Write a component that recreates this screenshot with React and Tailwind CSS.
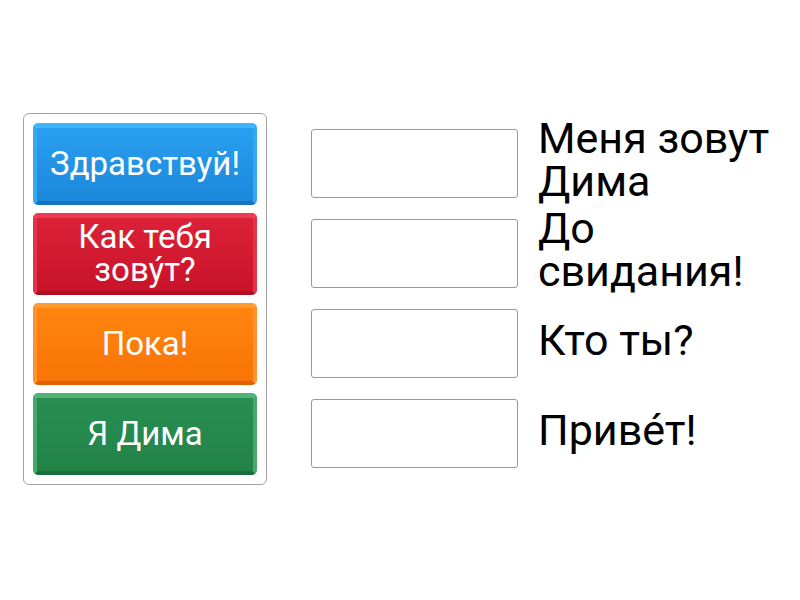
const cards = [
  { label: 'Здравствуй!', edge: 'border-t-[#3fb6fb] border-x-[#35a8f3] border-b-[#1674c4]', face: 'bg-gradient-to-b from-[#2a9ff0] to-[#1c88da]' },
  { label: 'Как тебя зову́т?', edge: 'border-t-[#ec3b52] border-x-[#e3334a] border-b-[#b00c22]', face: 'bg-gradient-to-b from-[#dc2138] to-[#c9132b]' },
  { label: 'Пока!', edge: 'border-t-[#ff9a30] border-x-[#ff922a] border-b-[#e36000]', face: 'bg-gradient-to-b from-[#ff850f] to-[#f97406]' },
  { label: 'Я Дима', edge: 'border-t-[#50b574] border-x-[#46a96a] border-b-[#1a6e3b]', face: 'bg-gradient-to-b from-[#288e52] to-[#238347]' },
]

const answers = ['Меня зовут Дима', 'До свидания!', 'Кто ты?', 'Приве́т!']

export default function App() {
  return (
    <div className="w-[800px] h-[600px] bg-white overflow-hidden" style={{ fontFamily: 'Roboto, "Noto Sans", sans-serif' }}>
      <div className="flex items-start pt-[113px] pl-[23px]">
        <div className="w-[244px] p-[9px] border-[1.5px] border-[#a3a3a3] rounded-[6px] flex flex-col gap-2">
          {cards.map((card) => (
            <div
              key={card.label}
              className={`h-[82px] rounded-[5px] border-t-[5px] border-x-[4px] border-b-[4px] ${card.edge} ${card.face} flex items-center justify-center px-1 text-center text-white text-[33px] leading-[33px]`}
            >
              <span className="max-w-[205px] pb-[3px]">{card.label}</span>
            </div>
          ))}
        </div>

        <div className="ml-[44px] pt-[9px] flex flex-col gap-2">
          {answers.map((text) => (
            <div key={text} className="h-[82px] flex items-center">
              <div className="w-[207px] h-[69px] border border-[#9a9a9a] rounded-[3px] bg-white shrink-0" />
              <div className="ml-[20px] w-[245px] pb-[6px] text-black text-[43px] leading-[43px]">{text}</div>
            </div>
          ))}
        </div>
      </div>
    </div>
  )
}
